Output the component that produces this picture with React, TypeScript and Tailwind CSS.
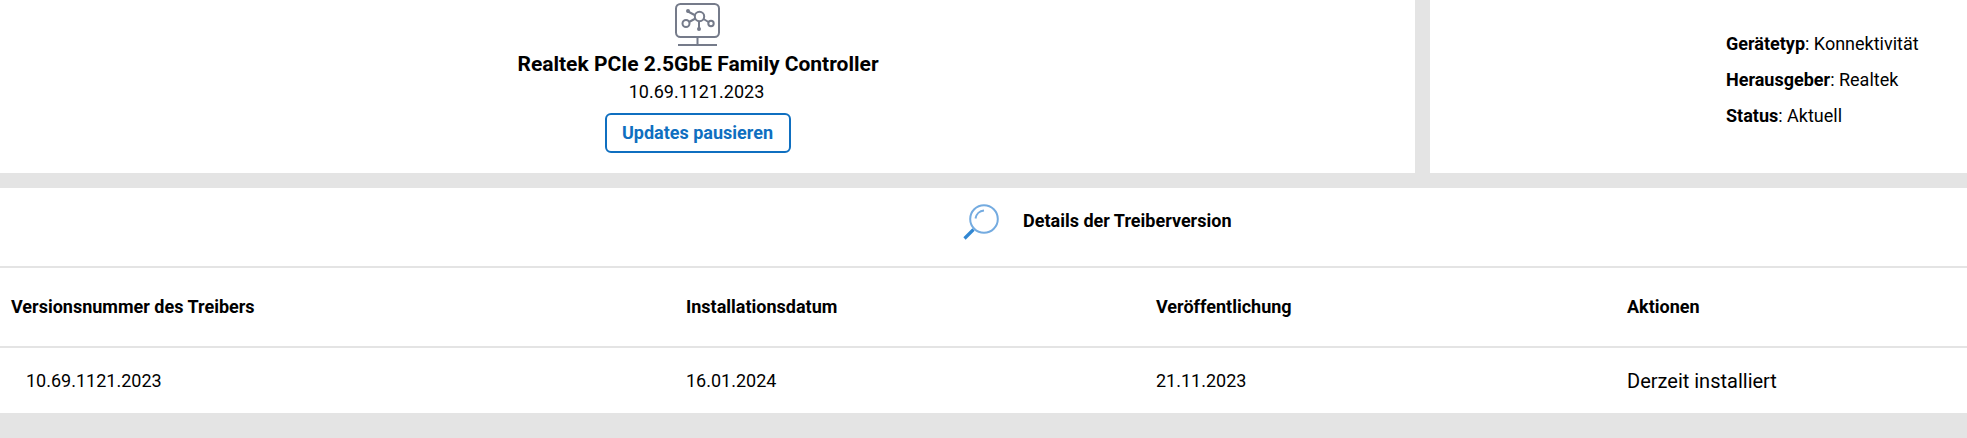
const cols = "grid grid-cols-[686px_470px_471px_340px]";

const details = [
  { label: "Gerätetyp", value: "Konnektivität" },
  { label: "Herausgeber", value: "Realtek" },
  { label: "Status", value: "Aktuell" },
];

function NetworkIcon() {
  return (
    <svg width="47" height="46" viewBox="0 0 47 46" fill="none" stroke="#757b8a" strokeWidth="2">
      <rect x="2" y="4" width="43" height="33" rx="4.5" />
      <path d="M23.5 37v8M4 45h39" />
      <circle cx="25.5" cy="16.5" r="4.7" />
      <circle cx="12" cy="23.5" r="3.5" />
      <circle cx="37" cy="23.5" r="2.7" />
      <path d="M14 11.5l7.5 4M15 22l6.5-3.5M29.5 19l5 3M25 21.5v7.5" />
      <circle cx="14" cy="11" r="1" />
      <circle cx="25" cy="29" r="1" />
    </svg>
  );
}

function SearchIcon() {
  return (
    <svg width="37" height="37" viewBox="0 0 37 37" fill="none">
      <circle cx="21" cy="16" r="13.8" stroke="#74abe0" strokeWidth="2" />
      <path d="M12.5 15.5a9.5 9.5 0 0 1 8.5-8" stroke="#74abe0" strokeWidth="2" />
      <path d="M10.5 26.5L1.5 35.5" stroke="#3187d2" strokeWidth="3.2" />
    </svg>
  );
}

export default function App() {
  return (
    <div className="h-[438px] w-[1967px] overflow-hidden bg-[#e4e4e4] font-['Roboto',sans-serif] text-lg text-black">
      <div className="flex h-[173px] gap-[15px]">
        <div className="flex w-[1415px] flex-col items-center bg-white pr-5">
          <NetworkIcon />
          <h2 className="mt-1 pl-px text-[21px] leading-7 font-bold">Realtek PCIe 2.5GbE Family Controller</h2>
          <p className="pr-0.5 leading-7">10.69.1121.2023</p>
          <button className="mt-[7px] h-10 w-[186px] rounded-md border-2 border-[#0f6fc0] font-bold text-[#0f6fc0]">
            Updates pausieren
          </button>
        </div>
        <div className="flex-1 bg-white pt-[26px] pl-[296px]">
          {details.map((d) => (
            <p key={d.label} className="leading-9">
              <b>{d.label}</b>: {d.value}
            </p>
          ))}
        </div>
      </div>
      <div className="mt-[15px] h-[225px] bg-white">
        <div className="flex h-[78px] items-start gap-[23px] pt-[15px] pl-[963px]">
          <SearchIcon />
          <h3 className="leading-9 font-bold">Details der Treiberversion</h3>
        </div>
        <div className={`${cols} h-[82px] items-center border-y-2 border-[#e4e4e4] font-bold`}>
          <span className="pl-[11px]">Versionsnummer des Treibers</span>
          <span>Installationsdatum</span>
          <span>Veröffentlichung</span>
          <span>Aktionen</span>
        </div>
        <div className={`${cols} h-[65px] items-center`}>
          <span className="pl-[26px]">10.69.1121.2023</span>
          <span>16.01.2024</span>
          <span>21.11.2023</span>
          <span className="text-xl">Derzeit installiert</span>
        </div>
      </div>
    </div>
  );
}
